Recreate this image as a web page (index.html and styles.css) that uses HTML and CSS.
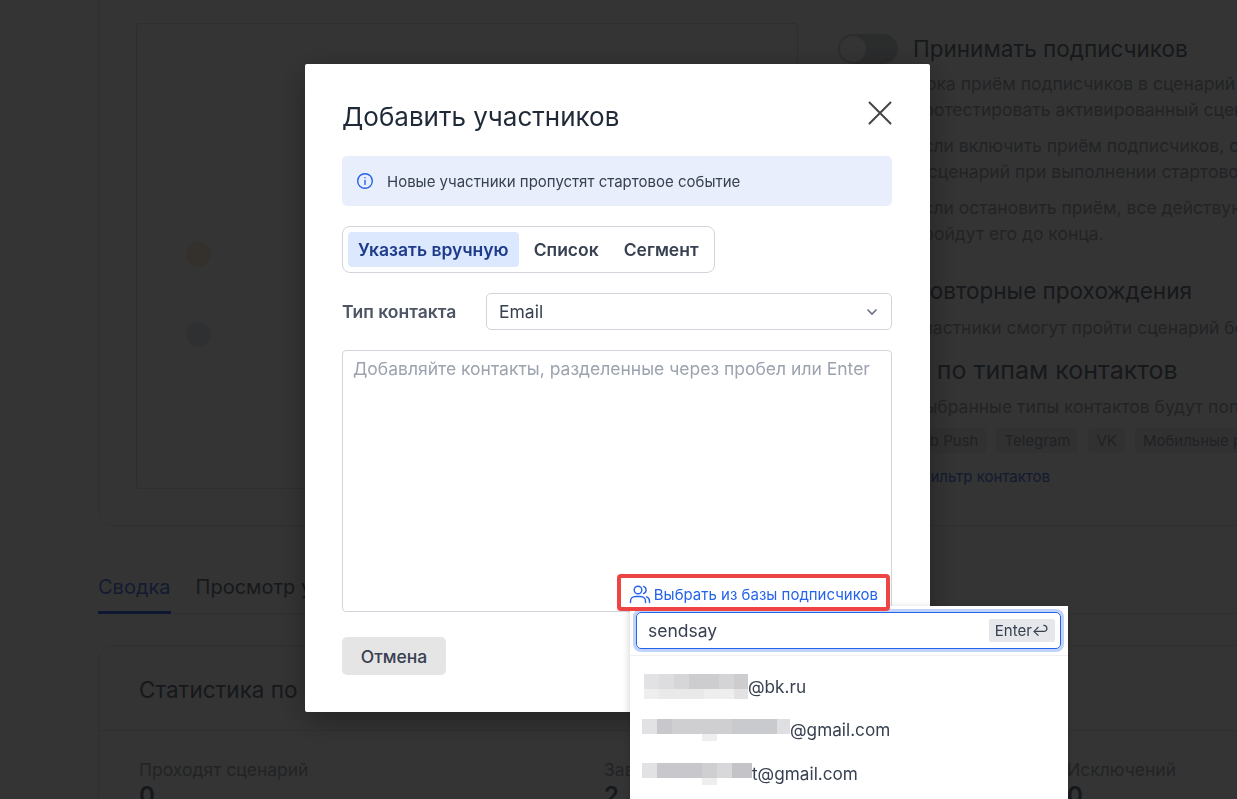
FILE: index.html
```html
<!DOCTYPE html>
<html>
<head>
  <title>Добавить участников</title>
  <link rel="stylesheet" href="styles.css">
</head>
<body>
  <div class="page">
    <div class="card scenario">
      <div class="canvas">
        <div class="node node-start"></div>
        <div class="node node-next"></div>
      </div>
      <div class="settings">
        <div class="setting-head">
          <span class="toggle"><span class="knob"></span></span>
          <h3>Принимать подписчиков</h3>
        </div>
        <div class="setting-body">
          <p>Пока приём подписчиков в сценарий не включён, можно<br>протестировать активированный сценарий</p>
          <p>Если включить приём подписчиков, они начнут попадать<br>в сценарий при выполнении стартового события</p>
          <p>Если остановить приём, все действующие участники<br>пройдут его до конца.</p>
          <h3 class="repeat-title">Повторные прохождения</h3>
          <p class="repeat-text">Участники смогут пройти сценарий без ограничений</p>
          <h3 class="filter-title">Фильтр по типам контактов</h3>
          <p class="filter-text">Выбранные типы контактов будут попадать в сценарий</p>
          <div class="chips">
            <span class="chip">Web Push</span>
            <span class="chip">Telegram</span>
            <span class="chip">VK</span>
            <span class="chip">Мобильные push</span>
          </div>
          <a class="filter-link">Фильтр контактов</a>
        </div>
      </div>
    </div>

    <div class="page-tabs">
      <a class="page-tab active">Сводка</a>
      <a class="page-tab">Просмотр участников</a>
    </div>

    <div class="card stats">
      <h2 class="stats-title">Статистика по участникам</h2>
      <div class="stats-row">
        <div class="stat stat-a"><span>Проходят сценарий</span><b>0</b></div>
        <div class="stat stat-b"><span>Завершили</span><b>2</b></div>
        <div class="stat stat-c"><span>Исключений</span><b>0</b></div>
      </div>
    </div>
  </div>

  <div class="overlay"></div>

  <div class="modal">
    <div class="modal-head">
      <h2>Добавить участников</h2>
      <svg class="close" width="24" height="24" viewBox="0 0 24 24"><path d="M1.500 1.500l21 21M22.500 1.500l-21 21"/></svg>
    </div>

    <div class="alert">
      <svg width="18" height="18" viewBox="0 0 18 18" fill="none" stroke="#2563eb" stroke-width="1.4" stroke-linecap="round"><circle cx="9" cy="9" r="7.3"/><path d="M9 8.400v4"/><path d="M9 5.600v.1"/></svg>
      <span>Новые участники пропустят стартовое событие</span>
    </div>

    <div class="source-tabs">
      <a class="source-tab active">Указать вручную</a>
      <a class="source-tab">Список</a>
      <a class="source-tab">Сегмент</a>
    </div>

    <div class="type-row">
      <label>Тип контакта</label>
      <div class="select">
        <span>Email</span>
        <svg width="12" height="8" viewBox="0 0 12 8" fill="none" stroke="#6b7280" stroke-width="1.6"><path d="M1.500 1.500L6 6l4.500-4.500"/></svg>
      </div>
    </div>

    <div class="contacts">
      <div class="placeholder">Добавляйте контакты, разделенные через пробел или Enter</div>
      <a class="pick-link">
        <svg width="22" height="20" viewBox="0 0 22 20" fill="none" stroke="#2563eb" stroke-width="1.4" stroke-linecap="round" stroke-linejoin="round"><circle cx="9" cy="6" r="3.8"/><path d="M1.500 18.500v-1.200c0-2.800 2.200-4.800 5-4.800h5c2.800 0 5 2 5 4.800v1.200"/><path d="M14.500 2.400a3.800 3.800 0 0 1 0 7.200"/><path d="M17.500 12.800c1.900.6 3 2.300 3 4.500v1.200"/></svg>
        <span>Выбрать из базы подписчиков</span>
      </a>
      <div class="dropdown">
        <div class="search">
          <span>sendsay</span>
          <span class="enter-key">Enter↩</span>
        </div>
        <div class="results">
          <div class="result result-1"><span class="mask mask-1"></span><span>@bk.ru</span></div>
          <div class="result result-2"><span class="mask mask-2"></span><span>@gmail.com</span></div>
          <div class="result result-3"><span class="mask mask-3"></span><span>t@gmail.com</span></div>
        </div>
      </div>
    </div>

    <div class="modal-foot">
      <button class="cancel">Отмена</button>
    </div>
  </div>
</body>
</html>
```
FILE: styles.css
```css
* {
  margin: 0;
  padding: 0;
  box-sizing: border-box;
}

html, body {
  height: 100%;
  overflow: hidden;
}

body {
  font-family: Inter, "Noto Sans", sans-serif;
  background-color: #ffffff;
  color: #1f2937;
}

/* page under the overlay */
.page {
  width: 1400px;
  margin-top: -20px;
  padding-left: 98px;
}

.card {
  border: 1px solid #e5e7eb;
  border-radius: 14px;
  background-color: #fdfdfd;
}

.scenario {
  display: flex;
  height: 546px;
  padding: 42px 37px 0;
}

.canvas {
  position: relative;
  flex: none;
  width: 662px;
  height: 466px;
  border: 1px solid #e0e2e6;
  border-radius: 4px;
}

.node {
  position: absolute;
  left: 49px;
  width: 25px;
  height: 25px;
  border-radius: 50%;
}

.node-start {
  top: 218px;
  background-color: #fdefd8;
}

.node-next {
  top: 298px;
  background-color: #e4e9f6;
}

.settings {
  margin-left: 40px;
  width: 600px;
  white-space: nowrap;
}

.setting-head {
  display: flex;
  align-items: center;
  gap: 15px;
  margin-top: 11px;
}

.toggle {
  width: 60px;
  height: 30px;
  border-radius: 15px;
  background-color: #d3d5d9;
  padding: 2px;
}

.knob {
  display: block;
  width: 26px;
  height: 26px;
  border-radius: 50%;
  background-color: #ffffff;
}

.settings h3 {
  font-size: 22.5px;
  font-weight: 400;
  line-height: 30px;
  color: #6f7a88;
}

.setting-body {
  padding: 7px 0 0 75px;
  font-size: 17.5px;
  line-height: 25.5px;
  color: #a7adb5;
}

.setting-body p {
  margin-bottom: 11px;
}

.settings .repeat-title {
  margin-top: 30px;
}

.setting-body .repeat-text {
  margin-top: 9px;
  margin-bottom: 0;
}

.settings .filter-title {
  margin-top: 14px;
  margin-left: -74px;
  font-size: 25px;
}

.setting-body .filter-text {
  margin-top: 9px;
  margin-bottom: 0;
}

.chips {
  display: flex;
  gap: 10px;
  margin-top: 9px;
  margin-left: -14px;
}

.chip {
  height: 25px;
  padding: 0 8px;
  border-radius: 4px;
  background-color: #eef0f2;
  font-size: 15px;
  line-height: 25px;
  color: #9ca3af;
}

.filter-link {
  display: block;
  margin-top: 11px;
  margin-left: 5px;
  font-size: 15px;
  color: #5f86e8;
}

.page-tabs {
  display: flex;
  gap: 25px;
  width: 1139px;
  height: 42px;
  margin-top: 46px;
  border-bottom: 1px solid #e5e7eb;
}

.page-tab {
  font-size: 20px;
  line-height: 30px;
  color: #6f7a88;
  white-space: nowrap;
}

.page-tab.active {
  height: 42px;
  border-bottom: 3px solid #4b78ee;
  color: #5f86e8;
}

.stats {
  margin-top: 31px;
  height: 300px;
}

.stats-title {
  height: 85px;
  padding: 29px 40px 0;
  border-bottom: 1px solid #e5e7eb;
  font-size: 22.5px;
  font-weight: 400;
  line-height: 30px;
  color: #6f7a88;
  white-space: nowrap;
}

.stats-row {
  display: flex;
  padding: 28px 40px 0;
}

.stat {
  font-size: 17.5px;
  line-height: 22px;
  color: #a7adb5;
}

.stat b {
  display: block;
  font-size: 24px;
  line-height: 30px;
  font-weight: 600;
  color: #6f7a88;
}

.stat-a {
  width: 465px;
}

.stat-b {
  width: 463px;
}

/* dimmed layer and dialog */
.overlay {
  position: fixed;
  inset: 0;
  background-color: rgba(0, 0, 0, 0.796);
}

.modal {
  position: fixed;
  left: 305px;
  top: 64px;
  width: 625px;
  height: 648px;
  padding: 36px 38px 37px 37px;
  border-radius: 2px;
  background-color: #ffffff;
  box-shadow: 0 8px 32px rgba(0, 0, 0, 0.35);
}

.modal-head {
  display: flex;
  align-items: center;
  justify-content: space-between;
  height: 32px;
}

.modal-head h2 {
  font-size: 26px;
  font-weight: 400;
  color: #1f2937;
}

.close {
  margin-bottom: 6px;
}

.close path {
  fill: none;
  stroke: #444444;
  stroke-width: 2;
  stroke-linecap: round;
}

.alert {
  display: flex;
  align-items: center;
  gap: 13px;
  height: 50px;
  margin-top: 24px;
  padding-left: 14px;
  border-radius: 5px;
  background-color: #e8eefb;
  font-size: 15px;
  color: #374151;
}

.source-tabs {
  display: inline-flex;
  gap: 5px;
  height: 47px;
  margin-top: 20px;
  padding: 5px;
  border: 1px solid #d1d5db;
  border-radius: 8px;
}

.source-tab {
  height: 35px;
  padding: 0 10px;
  border-radius: 4px;
  font-size: 17.5px;
  font-weight: 600;
  line-height: 36px;
  color: #374151;
  white-space: nowrap;
}

.source-tab.active {
  background-color: #dbe8fd;
  color: #1e3a8a;
}

.type-row {
  display: flex;
  align-items: center;
  margin-top: 20px;
}

.type-row label {
  width: 144px;
  font-size: 17.5px;
  font-weight: 600;
  color: #4b5563;
}

.select {
  display: flex;
  flex: 1;
  align-items: center;
  justify-content: space-between;
  height: 37px;
  padding: 0 13px 0 12px;
  border: 1px solid #d1d5db;
  border-radius: 5px;
  font-size: 17.5px;
  color: #374151;
}

.contacts {
  position: relative;
  height: 262px;
  margin-top: 20px;
  border: 1px solid #d1d5db;
  border-radius: 4px;
}

.placeholder {
  padding: 8px 10px;
  font-size: 17.5px;
  line-height: 20px;
  color: #9ca3af;
  white-space: nowrap;
}

.pick-link {
  position: absolute;
  z-index: 2;
  right: 1px;
  bottom: 0;
  display: flex;
  align-items: center;
  gap: 3px;
  height: 37px;
  padding: 3px 8px 0;
  border: 4px solid #ef4444;
  border-radius: 4px;
  background-color: #ffffff;
  font-size: 15px;
  color: #2563eb;
  white-space: nowrap;
}

.dropdown {
  position: absolute;
  z-index: 1;
  left: 287px;
  top: 255px;
  width: 438px;
  height: 240px;
  padding: 6px 0 0;
  background-color: #ffffff;
  box-shadow: 0 2px 8px rgba(0, 0, 0, 0.2);
}

.search {
  display: flex;
  align-items: center;
  justify-content: space-between;
  width: 425px;
  height: 37px;
  margin-left: 6px;
  padding: 0 5px 0 11px;
  border: 1.5px solid #2563eb;
  border-radius: 5px;
  box-shadow: 0 0 0 3px #bfd3fb;
  font-size: 17.5px;
  color: #374151;
}

.enter-key {
  height: 23px;
  padding: 0 6px;
  border-radius: 2px;
  background-color: #e5e7eb;
  font-size: 15px;
  line-height: 23px;
}

.results {
  margin-top: 6px;
  border-top: 1px solid #f0f0f0;
}

.result {
  position: absolute;
  display: flex;
  align-items: center;
  font-size: 17.2px;
  line-height: 25px;
  color: #374151;
}

.result-1 {
  left: 14px;
  top: 68px;
}

.result-2 {
  left: 12px;
  top: 111px;
}

.result-3 {
  left: 12px;
  top: 155px;
}

/* pixelated parts of the addresses */
.mask {
  display: block;
  flex: none;
  background-repeat: no-repeat;
}

.mask-1 {
  width: 104px;
  height: 25px;
  background-image:
    linear-gradient(90deg, #e2e2e4 15px, #dddde0 15px 30px, #d6d6d9 30px 45px, #cdcdd0 45px 75px, #d4d4d7 75px 90px, #cdcdd0 90px),
    linear-gradient(90deg, #eeeeef 15px, #e9e9ea 15px 60px, #eeeeef 60px 90px, #e2e2e4 90px);
  background-size: 100% 15px, 100% 10px;
  background-position: 0 0, 0 15px;
}

.mask-2 {
  width: 148px;
  height: 22px;
  background-image:
    linear-gradient(90deg, #e2e2e4 15px, #c8c8cc 15px 30px, #cfcfd2 30px 90px, #c8cacd 90px 135px, #dfdfe2 135px),
    linear-gradient(90deg, #eeeeef, #eeeeef);
  background-size: 100% 15px, 15px 7px;
  background-position: 0 0, 60px 15px;
}

.mask-3 {
  width: 110px;
  height: 22px;
  background-image:
    linear-gradient(90deg, #e2e2e4 15px, #c8c8cc 15px 60px, #cfcfd2 60px 75px, #d8d8da 75px 90px, #c4c4c8 90px),
    linear-gradient(90deg, #eeeeef, #eeeeef);
  background-size: 100% 15px, 15px 7px;
  background-position: 0 0, 60px 15px;
}

.modal-foot {
  margin-top: 25px;
}

.cancel {
  width: 104px;
  height: 38px;
  border: none;
  border-radius: 5px;
  background-color: #e5e5e5;
  font-family: Inter, "Noto Sans", sans-serif;
  font-size: 17.5px;
  font-weight: 500;
  color: #374151;
}
```
